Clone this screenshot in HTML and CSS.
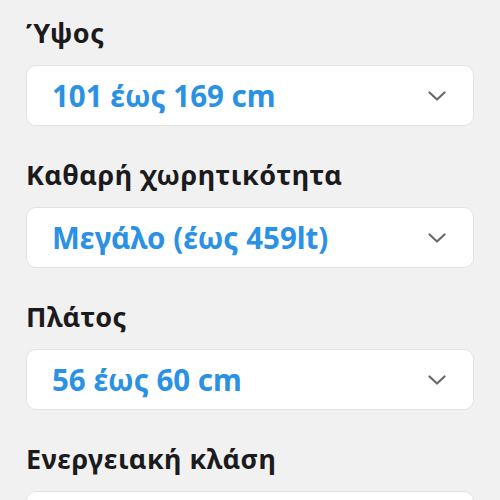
FILE: index.html
```html
<!DOCTYPE html>
<html lang="el">
<head>
  <meta charset="UTF-8" />
  <meta name="viewport" content="width=device-width, initial-scale=1.0" />
  <title>Φίλτρα</title>
  <link rel="stylesheet" href="styles.css">
</head>
<body>
  <main class="filters">
    <div class="field">
      <div class="label">Ύψος</div>
      <div class="select"><span class="value">101 έως 169 cm</span><svg class="chev" viewBox="0 0 18 10"><path d="M1.5 1.5 L9 8.5 L16.5 1.5"/></svg></div>
    </div>
    <div class="field">
      <div class="label">Καθαρή χωρητικότητα</div>
      <div class="select"><span class="value">Μεγάλο (έως 459lt)</span><svg class="chev" viewBox="0 0 18 10"><path d="M1.5 1.5 L9 8.5 L16.5 1.5"/></svg></div>
    </div>
    <div class="field">
      <div class="label">Πλάτος</div>
      <div class="select"><span class="value">56 έως 60 cm</span><svg class="chev" viewBox="0 0 18 10"><path d="M1.5 1.5 L9 8.5 L16.5 1.5"/></svg></div>
    </div>
    <div class="field">
      <div class="label">Ενεργειακή κλάση</div>
      <div class="select"></div>
    </div>
  </main>
</body>
</html>
```

FILE: styles.css
```css
* { margin: 0; padding: 0; box-sizing: border-box; }
html, body { width: 100%; height: 100%; overflow: hidden; }
body {
  background: #f1f1f1;
  font-family: "Noto Sans", "Open Sans", sans-serif;
}

.filters { padding: 17px 26px 0; }

.field { margin-bottom: 33px; }

.label {
  font-size: 27px;
  line-height: 32px;
  font-weight: 700;
  letter-spacing: 0.5px;
  color: #1b1b1d;
}

.select {
  margin-top: 16px;
  height: 61px;
  background: #fff;
  border: 1px solid #e3e3e3;
  border-radius: 10px;
  display: flex;
  align-items: center;
  justify-content: space-between;
  padding: 0 27px 0 25px;
}

.value {
  font-size: 29.5px;
  font-weight: 700;
  color: #2b91e4;
}

.chev { width: 18px; height: 10px; }
.chev path { fill: none; stroke: #6a6a6a; stroke-width: 2.2; stroke-linecap: round; stroke-linejoin: round; }
```
